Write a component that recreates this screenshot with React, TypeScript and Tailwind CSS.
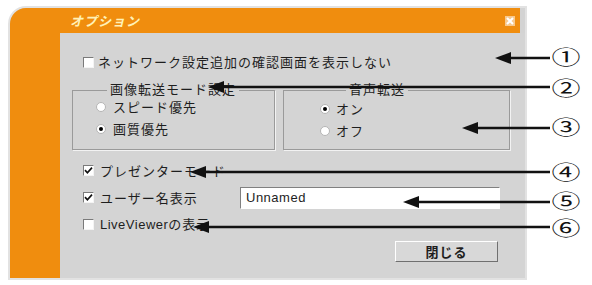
import React from "react";

function Check({ checked }: { checked?: boolean }) {
  return (
    <span className="flex h-[11px] w-[11px] shrink-0 items-center justify-center border border-t-[#7a7a7a] border-l-[#7a7a7a] border-b-[#f4f4f4] border-r-[#f4f4f4] bg-white">
      {checked && (
        <svg width="9" height="9" viewBox="0 0 9 9">
          <path d="M1 4.2 L3.4 6.8 L8 1.6" stroke="#111" strokeWidth="1.7" fill="none" />
        </svg>
      )}
    </span>
  );
}

function Radio({ on }: { on?: boolean }) {
  return (
    <span className="flex h-[10px] w-[10px] shrink-0 items-center justify-center rounded-full border border-[#b5b5b5] bg-white">
      {on && <span className="h-[4px] w-[4px] rounded-full bg-black" />}
    </span>
  );
}

const arrows = [
  { y: 58, tip: 495 },
  { y: 87, tip: 208 },
  { y: 128, tip: 462 },
  { y: 172, tip: 190 },
  { y: 202, tip: 403 },
  { y: 227, tip: 193 },
];

const marks = [
  { n: "①", y: 57 },
  { n: "②", y: 88 },
  { n: "③", y: 127 },
  { n: "④", y: 172 },
  { n: "⑤", y: 201 },
  { n: "⑥", y: 228 },
];

export default function App() {
  return (
    <div className="relative h-[285px] w-[592px] overflow-hidden bg-white font-['Noto_Sans_CJK_JP','Liberation_Sans',sans-serif]">
      <div className="pl-[10px] pt-[8px]">
        <div className="flex h-[270px] w-[515px] flex-col overflow-hidden rounded-tl-[16px] bg-[#d3d3d3] shadow-[0_0_0_2px_#e2e2e2]">
          {/* title bar */}
          <div className="mr-[5px] flex h-[25px] shrink-0 items-center justify-between bg-[#f08d0e] pl-[60px] pr-[5px]">
            <span className="text-[13px] font-bold italic leading-none tracking-[1px] text-[#fff1b8]">オプション</span>
            <span className="flex h-[10px] w-[10px] items-center justify-center bg-[#f7c98e]">
              <svg width="8" height="8" viewBox="0 0 8 8">
                <path d="M1 1 L7 7 M7 1 L1 7" stroke="#fff" strokeWidth="2" />
              </svg>
            </span>
          </div>

          <div className="flex flex-1">
            <div className="w-[50px] bg-[#f08d0e]" />
            <div className="flex flex-1 flex-col bg-[#d4d4d4] text-[13px] leading-[14px] tracking-[1px] text-[#1e1e1e]">
              <div className="ml-[23px] mt-[21px] flex h-[16px] items-center gap-[4px]">
                <Check />
                <span>ネットワーク設定追加の確認画面を表示しない</span>
              </div>

              <div className="ml-[12px] mt-[12px] flex gap-[8px]">
                <fieldset className="h-[68px] w-[203px] border border-[#9a9a9a] pl-[23px] shadow-[1px_1px_0_#f2f2f2]">
                  <legend className="ml-[11px] px-[3px] pb-[2px] leading-[14px]">画像転送モード設定</legend>
                  <div className="flex flex-col gap-[6px] pt-[1px]">
                    <div className="flex h-[16px] items-center gap-[7px]">
                      <Radio />
                      <span>スピード優先</span>
                    </div>
                    <div className="flex h-[16px] items-center gap-[7px]">
                      <Radio on />
                      <span>画質優先</span>
                    </div>
                  </div>
                </fieldset>
                <fieldset className="h-[68px] w-[227px] border border-[#9a9a9a] pl-[36px] shadow-[1px_1px_0_#f2f2f2]">
                  <legend className="ml-[26px] px-[3px] pb-[2px] leading-[14px]">音声転送</legend>
                  <div className="flex flex-col gap-[6px] pt-[3px]">
                    <div className="flex h-[16px] items-center gap-[6px]">
                      <Radio on />
                      <span>オン</span>
                    </div>
                    <div className="flex h-[16px] items-center gap-[6px]">
                      <Radio />
                      <span>オフ</span>
                    </div>
                  </div>
                </fieldset>
              </div>

              <div className="mt-[7px] flex flex-col pl-[23px]">
                <div className="flex h-[27px] items-center gap-[6px]">
                  <Check checked />
                  <span>プレゼンターモード</span>
                </div>
                <div className="flex h-[27px] items-center">
                  <div className="flex w-[157px] items-center gap-[6px]">
                    <Check checked />
                    <span>ユーザー名表示</span>
                  </div>
                  <div className="flex h-[22px] w-[260px] items-center border border-t-[#808080] border-l-[#808080] border-b-white border-r-white bg-white pl-[5px] font-['Liberation_Sans',sans-serif] text-[13px] tracking-[0.5px]">
                    Unnamed
                  </div>
                </div>
                <div className="flex h-[27px] items-center gap-[6px]">
                  <Check />
                  <span>
                    <span className="font-['Liberation_Sans',sans-serif] tracking-[0.5px]">LiveViewer</span>の表示
                  </span>
                </div>
              </div>

              <div className="ml-[335px] mt-[3px] flex h-[21px] w-[103px] items-center justify-center border border-t-white border-l-white border-b-[#707070] border-r-[#707070] bg-[#d8d8d8] text-[13px] font-bold">
                閉じる
              </div>
            </div>
          </div>
        </div>
      </div>

      {/* annotation overlay */}
      <svg className="pointer-events-none absolute left-0 top-0" width="592" height="285">
        {arrows.map((a, i) => (
          <g key={i}>
            <line x1={a.tip + 10} y1={a.y} x2={550} y2={a.y} stroke="#111" strokeWidth="2.5" />
            <polygon points={`${a.tip},${a.y} ${a.tip + 16},${a.y - 6} ${a.tip + 16},${a.y + 6}`} fill="#111" />
          </g>
        ))}
      </svg>
      {marks.map((m) => (
        <span
          key={m.n}
          className="absolute left-[556px] -translate-y-1/2 scale-x-[1.45] text-[20px] leading-none text-[#111]"
          style={{ top: m.y }}
        >
          {m.n}
        </span>
      ))}
    </div>
  );
}
